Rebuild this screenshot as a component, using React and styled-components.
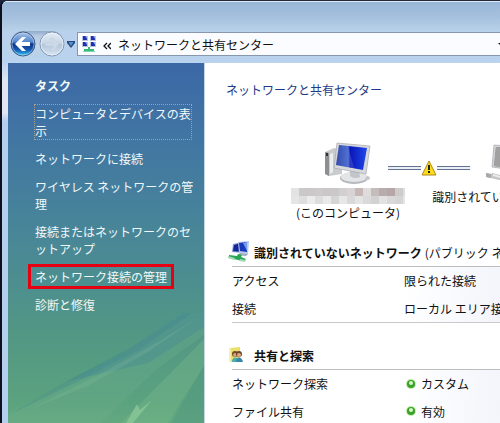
import styled, { createGlobalStyle } from "styled-components";

const GlobalStyle = createGlobalStyle`
* {
box-sizing: border-box;
}
body {
margin: 0;
background-color: #1d2440;
font-family: "Noto Sans CJK JP", "Liberation Sans", sans-serif;
font-size: 12px;
line-height: 17px;
color: #111;
}
button {
border: 0;
padding: 0;
background: none;
font: inherit;
color: inherit;
}
`;

const Window = styled.div`
display: flex;
flex-direction: column;
min-height: 100vh;
overflow: hidden;
border-top: 1px solid #24283a;
border-left: 2px solid #0c0f1c;
border-top-left-radius: 7px;
background: linear-gradient(#b9d0ea 0, #b9d2ee 60px, #dfe6f2 80px, #dfe6f2 112px, #b4cfee 120px, #b4cfee 100%);
`;

const TitleBar = styled.div`
height: 30px;
border-top: 1px solid #dcebf8;
border-top-left-radius: 5px;
background: linear-gradient(#98b6d7, #a5c0de 50%, #b8d1e9);
`;

const Toolbar = styled.div`
display: flex;
align-items: center;
gap: 1px;
height: 26px;
padding-left: 8px;
margin-bottom: 6px;
`;

const NavButtons = styled.div`
display: flex;
gap: 3px;
border-radius: 13px;
background: linear-gradient(#8fa9c8 0, #b7cce3 5px, #c0d5ec 14px, #b9d0ea 100%);
`;

const NavButton = styled.button`
display: flex;
`;

const AddressBar = styled.div`
flex: 1;
display: flex;
align-items: center;
height: 24px;
padding-left: 4px;
border: 1px solid #8797ad;
border-right: 0;
background-color: #fafcff;
`;

const Crumb = styled.button`
margin-left: 7px;
white-space: nowrap;
`;

const DropButton = styled.button`
display: flex;
margin-left: auto;
margin-right: -6px;
`;

const Body = styled.div`
flex: 1;
display: flex;
margin-left: 6px;
`;

const Sidebar = styled.nav`
position: relative;
flex: none;
width: 197px;
padding: 14px 8px 14px 27px;
border-right: 1px solid #c3d5e2;
background: linear-gradient(#3c68a6 0, #4073a4 60px, #457f9d 130px, #4b8b93 200px, #529784 270px, #5ba27f 340px, #64aa80 100%);
color: #f1f8f8;
`;

const SidebarTitle = styled.h2`
margin: 0 0 11px;
font-size: 12px;
font-weight: bold;
`;

const Streaks = styled.svg`
position: absolute;
right: 0;
bottom: 0;
`;

const TaskList = styled.ul`
position: relative;
display: flex;
flex-direction: column;
gap: 11px;
margin: 0;
padding: 0;
list-style: none;
`;

const TaskItem = styled.li`
display: flex;
`;

const TaskLink = styled.a`
color: inherit;
text-decoration: none;
line-break: anywhere;
`;

const FocusedLink = styled(TaskLink)`
max-width: 158px;
margin: -1px;
border: 1px dotted #a99f8d;
`;

const MarkedLink = styled(TaskLink)`
margin: -4px -7px;
padding: 1px 4px;
border: 3px solid #e60012;
`;

const Main = styled.main`
flex: 1;
min-width: 0;
overflow: hidden;
padding: 18px 0 0 21px;
background-color: white;
white-space: nowrap;
`;

const PageTitle = styled.h1`
margin: 0;
font-size: 12px;
font-weight: normal;
color: #1f3b87;
`;

const NetworkMap = styled.div`
display: grid;
grid-template-columns: repeat(4, 84px);
grid-template-rows: 48px auto;
margin: 42px 0 17px 38px;
`;

const Device = styled.div`
display: flex;
grid-row: 1;
grid-column: ${(props) => props.$column} / span 2;
justify-self: center;
align-self: center;
`;

const DeviceLabel = styled.div`
grid-row: 2;
grid-column: ${(props) => props.$column} / span 2;
display: flex;
flex-direction: column;
align-items: center;
`;

const Link = styled.div`
grid-row: 1;
grid-column: 2 / span 2;
align-self: center;
display: flex;
align-items: center;
margin: 8px 46px 0 40px;
`;

const Wire = styled.div`
flex: 1;
height: 4px;
border-top: 1px solid #64718c;
border-bottom: 1px solid #64718c;
background-color: #e9edf5;
`;

const Section = styled.section`
margin-left: 6px;

& + & {
margin-top: 18px;
}
`;

const SectionHeader = styled.div`
display: flex;
align-items: center;
height: 28px;
margin-left: -4px;
`;

const SectionIcon = styled.div`
flex: none;
display: flex;
width: 26px;
`;

const SectionTitle = styled.h2`
margin: 0;
font-size: 12px;
font-weight: bold;
`;

const SectionNote = styled.span`
margin-left: 3px;
`;

const Table = styled.table`
width: 100%;
border-collapse: collapse;
table-layout: fixed;
border-top: 1px solid #bdbdbd;
border-bottom: 1px solid #c9c9c9;
`;

const Name = styled.th`
width: 172px;
height: 28px;
padding: 0;
font-weight: normal;
text-align: left;
`;

const Value = styled.td`
padding: 0;
overflow: hidden;
background: linear-gradient(90deg, white, #f3f5fb);
`;

const Status = styled.div`
display: flex;
align-items: center;
gap: 5px;
padding-left: 2px;
`;

const MOSAIC = [
    ["#e3e3e3", "#cbc8c8", "#cac8c8", "#cfcaca", "#cdc6c6", "#c9c9cb", "#d2cfcf", "#d9d4d3", "#c6b8b6", "#dedcdc", "#c5bcbb", "#b8adad", "#b5a7a7", "#cfcbcb", "#dedede"],
    ["#e5e5e5", "#dedede", "#ececec", "#ddd", "#e9e9e9", "#d5d5d5", "#e7e7e7", "#d9d9d9", "#e4e4e4", "#dadada", "#d2d2d2", "#e2e2e2", "#d9d9d9", "#d5d5d5", "#e5e5e5"],
];

function BackIcon() {
    return (
        <svg width="26" height="26" viewBox="0 0 26 26">
            <defs>
                <linearGradient id="back" x1="0" y1="0" x2="0" y2="1">
                    <stop offset="0" stopColor="#a9c5ea" />
                    <stop offset=".42" stopColor="#5284c9" />
                    <stop offset=".5" stopColor="#0d3586" />
                    <stop offset=".75" stopColor="#145bb5" />
                    <stop offset="1" stopColor="#36cdf7" />
                </linearGradient>
            </defs>
            <circle cx="13" cy="13" r="12" fill="url(#back)" stroke="#405880" />
            <circle cx="13" cy="13" r="11" fill="none" stroke="#d3e5fa" strokeOpacity=".5" />
            <path d="M5 13l7-7h4l-4.500 5H20v4h-8.500L16 20h-4z" fill="white" />
        </svg>
    );
}

function ForwardIcon() {
    return (
        <svg width="26" height="26" viewBox="0 0 26 26">
            <defs>
                <linearGradient id="forward" x1="0" y1="0" x2="0" y2="1">
                    <stop offset="0" stopColor="#e4edf6" />
                    <stop offset=".48" stopColor="#c6d5e5" />
                    <stop offset=".52" stopColor="#b4c6d9" />
                    <stop offset="1" stopColor="#d7e6f3" />
                </linearGradient>
            </defs>
            <circle cx="13" cy="13" r="12" fill="url(#forward)" stroke="#7f93ae" />
            <circle cx="13" cy="13" r="11" fill="none" stroke="#f2f8ff" strokeOpacity=".7" />
            <path d="M20 13l-6-6h-3l4 5H6v3h9l-4 5h3z" fill="#cddae7" stroke="#bccbdc" strokeWidth=".5" />
        </svg>
    );
}

function NetworkIcon() {
    return (
        <svg width="14" height="18" viewBox="0 0 14 18">
            {[[0, 1], [8, 1], [0, 7], [8, 7]].map(([x, y]) => (
                <g key={`${x}-${y}`}>
                    <rect x={x} y={y} width="6" height="5" fill="#b7c2da" />
                    <rect x={x + 1} y={y} width="4" height="4" fill="#1c2fae" />
                    <path d={`M${x + 3} ${y}h2v3z`} fill="#8a9fe6" />
                </g>
            ))}
            <path d="M6 12h2v2h4v3H2v-3h4z" fill="#35b878" />
            <path d="M1 16h12v1H1z" fill="#7fd6a8" />
        </svg>
    );
}

function ComputerIcon() {
    return (
        <svg width="46" height="44" viewBox="0 0 46 44">
            <defs>
                <linearGradient id="screen" x1="0" y1="0" x2="1" y2="0">
                    <stop offset="0" stopColor="#142f9c" />
                    <stop offset=".4" stopColor="#3559cf" />
                    <stop offset=".45" stopColor="#0a16b5" />
                    <stop offset="1" stopColor="#2048ec" />
                </linearGradient>
            </defs>
            <path d="M0 10l9-4 8 2v24L4 34 0 32z" fill="#c9cbcd" />
            <path d="M0 10l4 1v23l-4-2z" fill="#8d8f93" />
            <path d="M5 12l3-1v19l-3 2z" fill="#eceded" />
            <path d="M1 11h2v3H1z" fill="#30333a" />
            <ellipse cx="29" cy="36" rx="14" ry="6" fill="#b6b9bc" />
            <ellipse cx="29" cy="35" rx="13" ry="5" fill="#e3e5e7" />
            <path d="M25 28l9 1 1 6c-3 2-8 1-10-1z" fill="#c2c5c9" />
            <path d="M12 1l33 3-4 28-32-6z" fill="#d6d8db" stroke="#a5a8ad" strokeWidth=".7" />
            <path d="M14 3l28 3-4 22-27-5z" fill="url(#screen)" />
            <path d="M14 3l9 1 6 22-18-3z" fill="white" fillOpacity=".14" />
            <path d="M42 34l3 1-1 3-4-1z" fill="#c4c6c8" />
        </svg>
    );
}

function UnknownNetworkIcon() {
    return (
        <svg width="60" height="44" viewBox="0 0 60 44">
            <path d="M8 3l28 2-2 24-28-4z" fill="#d2d4d6" stroke="#a5a8ad" strokeWidth=".7" />
            <path d="M10 5l24 2-2 20-24-3z" fill="#858585" />
            <path d="M10 5l10 1 4 20-16-2z" fill="#a1a1a1" />
            <path d="M0 31l5 1 1-1 8 2 46 5v4l-47-4-8-2-5-1z" fill="#c2c4c6" />
            <path d="M0 31l5 1v4l-5-1z" fill="#a7a9ac" />
            <path d="M7 32l7 2v2l-7-2z" fill="#ececec" />
        </svg>
    );
}

function WarningIcon() {
    return (
        <svg width="16" height="16" viewBox="0 0 16 16">
            <path d="M8 1l7 14H1z" fill="#ffd91c" stroke="#ab8b16" strokeLinejoin="round" />
            <path d="M7 5h2v5H7zM7 11h2v2H7z" fill="#222" />
        </svg>
    );
}

function PublicNetworkIcon() {
    return (
        <svg width="24" height="22" viewBox="0 0 24 22">
            <path d="M5 3l9-2 1 11-11-1z" fill="#8598cb" />
            <path d="M6 4l7-2 1 9-9-1z" fill="#16249b" />
            <path d="M10 1l11-1-1 13-9-1z" fill="#b6c8ed" />
            <path d="M11 2l8-1v10l-7-1z" fill="#1638b9" />
            <path d="M15 2l4-1v9z" fill="#759ceb" />
            <path d="M12 12l8 1-2 2-8-1z" fill="#9ba8bd" />
            <path d="M1 14l8 1 1-2 4 1-1 2 5 2-2 2-6-1-9-2z" fill="#28a654" />
            <path d="M0 15l7 2-1 2-6-2zM12 18l6 1-1 2-6-1z" fill="#a4d9b5" />
        </svg>
    );
}

function SharingIcon() {
    return (
        <svg width="16" height="16" viewBox="0 0 16 16">
            <path d="M1 1l11-1v15H1z" fill="#eadf6a" />
            <path d="M1 1h2v14H1z" fill="#f8f1a3" />
            <circle cx="7" cy="7" r="3" fill="#704a2c" />
            <circle cx="7" cy="8" r="2" fill="#d8a178" />
            <path d="M4 15c0-6 6-6 7 0z" fill="#48aeb5" />
            <circle cx="11" cy="7" r="3" fill="#704426" />
            <circle cx="11" cy="8" r="2" fill="#dbaa82" />
            <path d="M8 15c0-6 6-6 7 0z" fill="#3a87a9" />
        </svg>
    );
}

function Dot() {
    return (
        <svg width="10" height="10" viewBox="0 0 10 10">
            <circle cx="5" cy="5" r="5" fill="#b9ecA2" />
            <circle cx="5" cy="5" r="4" fill="#3d9f2c" />
            <circle cx="5" cy="4" r="2" fill="#d8f7c6" />
        </svg>
    );
}

function Mosaic() {
    return (
        <svg width="114" height="16" viewBox="0 0 114 16" shapeRendering="crispEdges">
            {MOSAIC.map((row, y) => row.map((color, x) => (
                <rect key={`${x}-${y}`} x={x * 8} y={y * 8} width="8" height="8" fill={color} />
            )))}
        </svg>
    );
}

export default function App() {
    return (
        <Window>
            <GlobalStyle />
            <TitleBar />
            <Toolbar>
                <NavButtons>
                    <NavButton aria-label="戻る"><BackIcon /></NavButton>
                    <NavButton aria-label="進む"><ForwardIcon /></NavButton>
                </NavButtons>
                <NavButton aria-label="履歴">
                    <svg width="10" height="7" viewBox="0 0 10 7">
                        <path d="M1 0h8v2L5 7 1 2z" fill="#234c82" />
                        <path d="M3 1h4v1L5 5 3 2z" fill="#5b8fca" />
                    </svg>
                </NavButton>
                <AddressBar>
                    <NetworkIcon />
                    <Crumb aria-label="上の階層">
                        <svg width="8" height="8" viewBox="0 0 8 8">
                            <path d="M4 1L1 4l3 3M8 1L5 4l3 3" fill="none" stroke="#111" strokeWidth="1.300" />
                        </svg>
                    </Crumb>
                    <Crumb>ネットワークと共有センター</Crumb>
                    <DropButton aria-label="以前の場所">
                        <svg width="8" height="5" viewBox="0 0 8 5">
                            <path d="M0 1h8L4 5z" fill="#111" />
                        </svg>
                    </DropButton>
                </AddressBar>
            </Toolbar>
            <Body>
                <Sidebar>
                    <Streaks width="196" height="113" viewBox="0 0 196 113">
                        <path d="M0 100L75 62 120 38 172 0h24v22L150 55 90 113H0z" fill="#6db08a" fillOpacity=".3" />
                        <path d="M60 68L120 38 172 0h24v14L140 50z" fill="#4a8b94" fillOpacity=".45" />
                        <path d="M0 102L75 66 130 37 184 0h-8L120 36 70 62z" fill="#3f8390" fillOpacity=".3" />
                        <path d="M20 97L90 62 150 29 192 3 140 39 80 73z" fill="#8cc4a1" fillOpacity=".2" />
                        <path d="M110 113L196 26v27l-38 60z" fill="#7cba8c" fillOpacity=".35" />
                        <path d="M162 113l34-60v60z" fill="#4f977f" fillOpacity=".4" />
                        <path d="M117 112l12-21 3 6 12-10-20 24z" fill="#8fcb9a" fillOpacity=".7" />
                    </Streaks>
                    <SidebarTitle>タスク</SidebarTitle>
                    <TaskList>
                        <TaskItem>
                            <FocusedLink href="#devices">コンピュータとデバイスの表示</FocusedLink>
                        </TaskItem>
                        <TaskItem>
                            <TaskLink href="#connect">ネットワークに接続</TaskLink>
                        </TaskItem>
                        <TaskItem>
                            <TaskLink href="#wireless">ワイヤレス ネットワークの管理</TaskLink>
                        </TaskItem>
                        <TaskItem>
                            <TaskLink href="#setup">接続またはネットワークのセットアップ</TaskLink>
                        </TaskItem>
                        <TaskItem>
                            <MarkedLink href="#manage">ネットワーク接続の管理</MarkedLink>
                        </TaskItem>
                        <TaskItem>
                            <TaskLink href="#repair">診断と修復</TaskLink>
                        </TaskItem>
                    </TaskList>
                </Sidebar>
                <Main>
                    <PageTitle>ネットワークと共有センター</PageTitle>
                    <NetworkMap>
                        <Device $column={1}><ComputerIcon /></Device>
                        <Link>
                            <Wire />
                            <WarningIcon />
                            <Wire />
                        </Link>
                        <Device $column={3}><UnknownNetworkIcon /></Device>
                        <DeviceLabel $column={1}>
                            <Mosaic />
                            <span>(このコンピュータ)</span>
                        </DeviceLabel>
                        <DeviceLabel $column={3}>識別されていないネットワーク</DeviceLabel>
                    </NetworkMap>
                    <Section>
                        <SectionHeader>
                            <SectionIcon><PublicNetworkIcon /></SectionIcon>
                            <SectionTitle>識別されていないネットワーク</SectionTitle>
                            <SectionNote>(パブリック ネットワーク)</SectionNote>
                        </SectionHeader>
                        <Table>
                            <tbody>
                                <tr>
                                    <Name scope="row">アクセス</Name>
                                    <Value>限られた接続</Value>
                                </tr>
                                <tr>
                                    <Name scope="row">接続</Name>
                                    <Value>ローカル エリア接続</Value>
                                </tr>
                            </tbody>
                        </Table>
                    </Section>
                    <Section>
                        <SectionHeader>
                            <SectionIcon><SharingIcon /></SectionIcon>
                            <SectionTitle>共有と探索</SectionTitle>
                        </SectionHeader>
                        <Table>
                            <tbody>
                                <tr>
                                    <Name scope="row">ネットワーク探索</Name>
                                    <Value><Status><Dot />カスタム</Status></Value>
                                </tr>
                                <tr>
                                    <Name scope="row">ファイル共有</Name>
                                    <Value><Status><Dot />有効</Status></Value>
                                </tr>
                            </tbody>
                        </Table>
                    </Section>
                </Main>
            </Body>
        </Window>
    );
}
